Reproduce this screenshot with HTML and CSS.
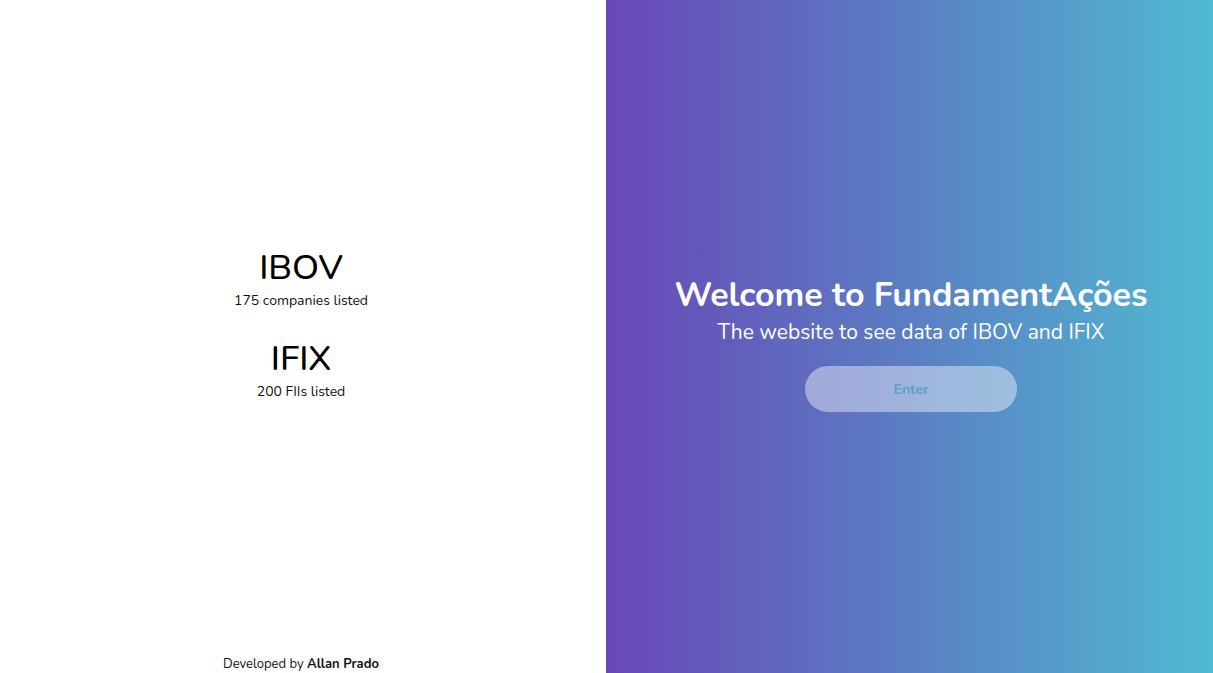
FILE: index.html
```html
<!DOCTYPE html>
<html lang="en">
<head>
<meta charset="utf-8">
<title>FundamentAções</title>
<link rel="stylesheet" href="styles.css">
</head>
<body>
<div class="page">
  <section class="left">
    <div class="indexes">
      <div class="index">
        <h2 class="index-name">IBOV</h2>
        <p class="index-count">175 companies listed</p>
      </div>
      <div class="index">
        <h2 class="index-name">IFIX</h2>
        <p class="index-count">200 FIIs listed</p>
      </div>
    </div>
    <footer class="footer">Developed by <strong>Allan Prado</strong></footer>
  </section>
  <section class="right">
    <h1 class="title">Welcome to FundamentAções</h1>
    <p class="subtitle">The website to see data of IBOV and IFIX</p>
    <button class="enter">Enter</button>
  </section>
</div>
</body>
</html>
```

FILE: styles.css
```css
* { box-sizing: border-box; }
html, body { margin: 0; padding: 0; height: 100%; }
body {
  font-family: "Nunito", "Lato", "Noto Sans", sans-serif;
  color: #000;
  background: #fff;
}
.page {
  display: grid;
  grid-template-columns: 606px 1fr;
  height: 100vh;
}
.left {
  display: flex;
  flex-direction: column;
  align-items: center;
  padding-right: 4px;
}
.indexes {
  flex: 1;
  display: flex;
  flex-direction: column;
  justify-content: center;
  align-items: center;
  gap: 25px;
  padding-bottom: 8px;
}
.index { text-align: center; }
.index-name {
  margin: 0;
  font-size: 35px;
  font-weight: 500;
  line-height: 46px;
}
.index-count {
  margin: 0;
  font-size: 14px;
  line-height: 20px;
  color: #111;
}
.footer {
  font-size: 13px;
  line-height: 18px;
  color: #111;
  padding-bottom: 0;
}
.footer strong { font-weight: 700; }
.right {
  background: linear-gradient(to right, #6847b7, #5b7ec4 50%, #4fbbd1);
  display: flex;
  flex-direction: column;
  align-items: center;
  justify-content: center;
  color: #fff;
  padding-top: 11px;
  padding-left: 3px;
}
.title {
  margin: 0;
  font-size: 34px;
  font-weight: 700;
  line-height: 46px;
}
.subtitle {
  margin: 0;
  font-size: 21px;
  line-height: 28px;
}
.enter {
  margin-top: 20px;
  width: 212px;
  height: 46px;
  border: none;
  border-radius: 23px;
  background: rgba(255, 255, 255, 0.42);
  color: #5b9fcf;
  font-family: inherit;
  font-weight: 700;
  font-size: 14px;
}
```
